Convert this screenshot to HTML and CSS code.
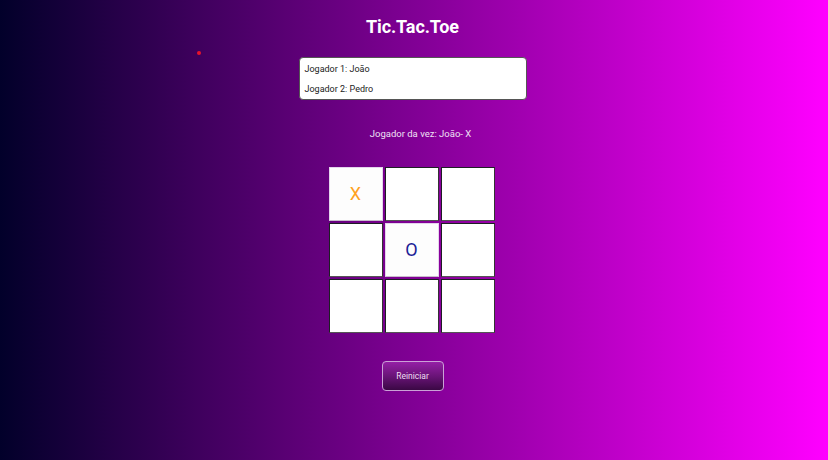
FILE: index.html
```html
<!DOCTYPE html>
<html lang="pt">
<head>
<meta charset="utf-8">
<title>Tic.Tac.Toe</title>
<link rel="stylesheet" href="styles.css">
</head>
<body>
<span class="dot"></span>
<main class="app">
  <h1 class="title">Tic.Tac.Toe</h1>
  <div class="players">
    <div class="player">Jogador 1: João</div>
    <div class="player">Jogador 2: Pedro</div>
  </div>
  <p class="status">Jogador da vez: João- X</p>
  <div class="board">
    <button class="cell played x">X</button>
    <button class="cell"></button>
    <button class="cell"></button>
    <button class="cell"></button>
    <button class="cell played o">O</button>
    <button class="cell"></button>
    <button class="cell"></button>
    <button class="cell"></button>
    <button class="cell"></button>
  </div>
  <button class="restart">Reiniciar</button>
</main>
</body>
</html>
```

FILE: styles.css
```css
* { box-sizing: border-box; }
html, body { height: 100%; }
body {
  margin: 0;
  background: linear-gradient(to right, #02002a 0%, #ff00ff 100%);
  font-family: Roboto, "Liberation Sans", Arial, sans-serif;
  color: #fff;
  overflow: hidden;
}
.dot {
  position: absolute;
  left: 197px;
  top: 51px;
  width: 4px;
  height: 4px;
  border-radius: 50%;
  background: #e8132a;
}
.app {
  display: flex;
  flex-direction: column;
  align-items: center;
  padding-top: 15px;
  padding-right: 3px;
}
.title {
  margin: 0;
  font-size: 18px;
  font-weight: 700;
  line-height: 24px;
  letter-spacing: -0.1px;
}
.players {
  margin-top: 18px;
  width: 228px;
  height: 43px;
  background: #fff;
  border: 1px solid #555;
  border-radius: 4px;
  padding: 6px 5px 0;
  color: #222;
  font-size: 9px;
  display: flex;
  flex-direction: column;
  gap: 9px;
  line-height: 11px;
}
.status {
  margin: 28px 0 0;
  font-size: 9.5px;
  line-height: 12px;
  color: #f0e0f4;
  padding-left: 16px;
}
.board {
  margin-top: 27px;
  display: grid;
  grid-template-columns: repeat(3, 54px);
  grid-template-rows: repeat(3, 54px);
  gap: 2px;
  margin-left: -2px;
}
.cell {
  width: 54px;
  height: 54px;
  margin: 0;
  padding: 0;
  background: #fff;
  border: 1px solid #1e1e24;
  border-bottom-color: #555;
  border-right-color: #333;
  font-family: Roboto, "Liberation Sans", Arial, sans-serif;
  font-size: 18px;
  line-height: 1;
}
.cell.played {
  background: #fdfdfd;
  border-color: #e4d4ec;
  border-bottom-color: #c8bccc;
}
.x { color: #ffa21f; }
.o { color: #1c2396; }
.restart {
  margin-top: 28px;
  width: 62px;
  height: 30px;
  border: 1px solid #caa2d6;
  border-radius: 4px;
  background: linear-gradient(to bottom, #9520a6 0%, #6a1478 50%, #3a0844 100%);
  color: #eedff2;
  font-family: Roboto, "Liberation Sans", Arial, sans-serif;
  font-size: 8.5px;
  padding: 0;
}
```
